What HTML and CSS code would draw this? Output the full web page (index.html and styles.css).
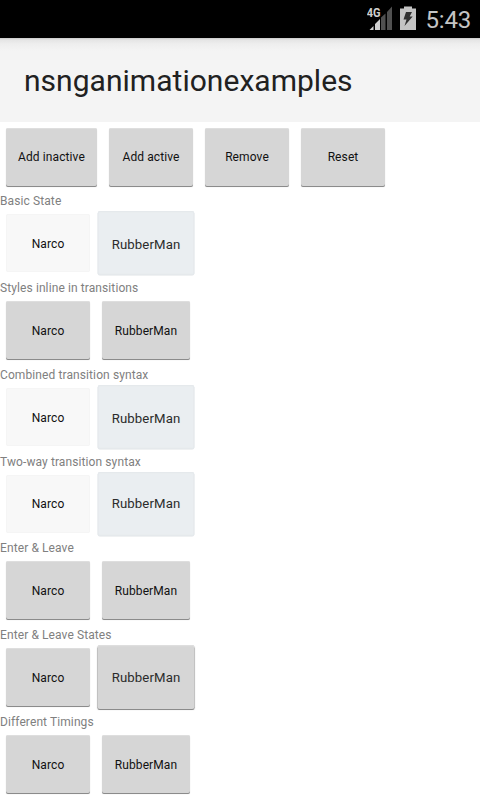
FILE: index.html
```html
<!DOCTYPE html>
<html lang="en">
<head>
<meta charset="utf-8">
<title>nsnganimationexamples</title>
<link rel="stylesheet" href="styles.css">
</head>
<body>
<div class="status">
  <svg class="signal" width="28" height="26" viewBox="0 0 28 26">
    <path fill="#505050" d="M14 24V11.5L18.5 7.5V24zM20 24V6L25 0.5V24z"/>
    <path fill="#cfcfcf" d="M2.5 24L6.5 20V24zM8 24V18L13 13V24z"/>
    <text class="network" x="-0.2" y="11.4" textLength="13.8" lengthAdjust="spacingAndGlyphs">4G</text>
  </svg>
  <svg class="battery" width="16" height="24" viewBox="0 0 16 24">
    <path fill="#c4c4c4" d="M4 0.5H12V2.5H16V24H0V2.5H4z"/>
    <path fill="#303030" d="M6 6H12L9.7 10.5H12.7L4.5 20L6.5 13.5H3.5z"/>
  </svg>
  <span class="clock">5:43</span>
</div>
<header class="bar"><h1 class="title">nsnganimationexamples</h1></header>
<main>
  <div class="row actions">
    <button class="btn wide">Add inactive</button><button class="btn">Add active</button><button class="btn">Remove</button><button class="btn">Reset</button>
  </div>
  <section><h2 class="label">Basic State</h2><div class="row"><button class="btn inactive">Narco</button><button class="btn hero active tint">RubberMan</button></div></section>
  <section><h2 class="label">Styles inline in transitions</h2><div class="row"><button class="btn">Narco</button><button class="btn hero">RubberMan</button></div></section>
  <section><h2 class="label">Combined transition syntax</h2><div class="row"><button class="btn inactive">Narco</button><button class="btn hero active tint">RubberMan</button></div></section>
  <section class="short"><h2 class="label">Two-way transition syntax</h2><div class="row"><button class="btn inactive">Narco</button><button class="btn hero active tint">RubberMan</button></div></section>
  <section><h2 class="label">Enter &amp; Leave</h2><div class="row"><button class="btn">Narco</button><button class="btn hero">RubberMan</button></div></section>
  <section><h2 class="label">Enter &amp; Leave States</h2><div class="row"><button class="btn">Narco</button><button class="btn hero active">RubberMan</button></div></section>
  <section><h2 class="label">Different Timings</h2><div class="row"><button class="btn">Narco</button><button class="btn hero">RubberMan</button></div></section>
</main>
</body>
</html>
```
FILE: styles.css
```css
* { box-sizing: border-box; }
body { margin: 0; width: 480px; height: 800px; overflow: hidden; background: #fff; font-family: Roboto, sans-serif; }
.status { height: 38px; background: #000; display: flex; justify-content: flex-end; align-items: flex-start; padding: 6px 9px 0 0; }
.signal { margin-right: 5px; }
.network { font: bold 12.5px Roboto, sans-serif; fill: #cfcfcf; }
.battery { margin-right: 10px; }
.clock { font-size: 24px; line-height: 28px; color: #c4c4c4; letter-spacing: -0.2px; }
.bar { height: 84px; padding: 0 24px; background: linear-gradient(#c8c8c8 0, #e5e5e5 2px, #eeeeee 6px, #f4f4f4 13px); }
.title { margin: 0; font-size: 30px; line-height: 85px; font-weight: 400; color: #212121; letter-spacing: 0.03px; }
.row { display: flex; gap: 12px; height: 70px; padding: 5px 6px 0; }
.actions { padding-top: 6px; }
.label { margin: 0; height: 17px; font-size: 12px; line-height: 18px; font-weight: 400; color: #808080; letter-spacing: 0.1px; white-space: nowrap; }
.short .row { height: 69px; }
.btn { width: 84px; height: 58px; padding: 2px 0 0; border: 0; border-radius: 2px; background: #d6d6d6; box-shadow: inset 0 1px #dedede, 0 1px #8b8b8b, 0 1px 1px 0 #cccccc; color: #111; font: 12px/16px Roboto, sans-serif; letter-spacing: 0.1px; white-space: nowrap; }
.actions .btn, .short .btn { padding-top: 0; }
.wide { width: 91px; }
.hero { width: 88px; }
.inactive { background: #f8f8f8; box-shadow: inset 0 0 0 1px #f5f5f5; }
.active { transform: scale(1.1); padding-top: 1px; color: #2b2b2b; }
.tint { background: #eaeef1; box-shadow: inset 0 0 0 1px #e5e9ec, 0 0.5px #dfe3e6; }
```
